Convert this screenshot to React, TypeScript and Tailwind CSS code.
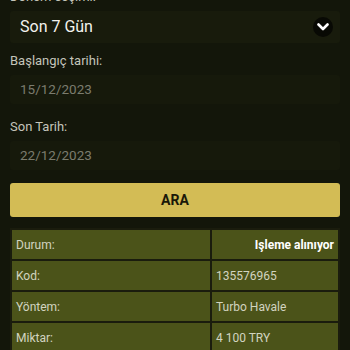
export default function App() {
  const rows: [string, string, boolean][] = [
    ["Durum:", "Işleme alınıyor", true],
    ["Kod:", "135576965", false],
    ["Yöntem:", "Turbo Havale", false],
    ["Miktar:", "4 100 TRY", false],
  ];

  return (
    <div
      className="h-[350px] w-[350px] overflow-hidden bg-[#13160a] px-[10px]"
      style={{ fontFamily: "Roboto, 'Noto Sans', sans-serif" }}
    >
      <div className="mt-[-12px] h-[18px] text-[13px] leading-[18px] text-[#c4c4ba]">
        Dönem seçimi:
      </div>

      <div className="mt-[5px] flex h-[32px] items-center justify-between rounded-[3px] bg-[#181b0c] pl-[10px] pr-[7px]">
        <span className="text-[16px] text-[#f2f2ee]">Son 7 Gün</span>
        <span className="flex h-[20px] w-[20px] items-center justify-center rounded-full bg-[#080904]">
          <svg width="12" height="8" viewBox="0 0 12 8" fill="none">
            <path
              d="M1.5 1.5 L6 6 L10.5 1.5"
              stroke="#ffffff"
              strokeWidth="2.6"
              strokeLinecap="round"
              strokeLinejoin="round"
            />
          </svg>
        </span>
      </div>

      <div className="mt-[9px] h-[18px] text-[13px] leading-[18px] text-[#c4c4ba]">
        Başlangıç tarihi:
      </div>
      <div className="mt-[5px] flex h-[29px] items-center rounded-[3px] bg-[#16190b] pl-[10px] text-[13.5px] text-[#7b7c6e]">
        15/12/2023
      </div>

      <div className="mt-[14px] h-[18px] text-[13px] leading-[18px] text-[#c4c4ba]">
        Son Tarih:
      </div>
      <div className="mt-[5px] flex h-[29px] items-center rounded-[3px] bg-[#16190b] pl-[10px] text-[13.5px] text-[#7b7c6e]">
        22/12/2023
      </div>

      <button
        type="button"
        className="mt-[13px] flex h-[34px] w-full items-center justify-center rounded-[3px] bg-[#d3bc55] text-[14px] font-bold text-[#1a1808]"
      >
        ARA
      </button>

      <div className="mt-[11px] grid grid-cols-[198px_1fr] gap-[2px] bg-[#1a1c0d] p-[2px]">
        {rows.map(([label, value, bold]) => (
          <div key={label} className="contents">
            <div className="flex h-[29px] items-center bg-[#4b5319] pl-[4px] text-[12px] text-[#d2d4c0]">
              {label}
            </div>
            <div
              className={
                bold
                  ? "flex h-[29px] items-center justify-end bg-[#4b5319] pr-[4px] text-[12px] font-bold text-[#ffffff]"
                  : "flex h-[29px] items-center bg-[#4b5319] pl-[4px] text-[12px] text-[#d2d4c0]"
              }
            >
              {value}
            </div>
          </div>
        ))}
      </div>
    </div>
  );
}
